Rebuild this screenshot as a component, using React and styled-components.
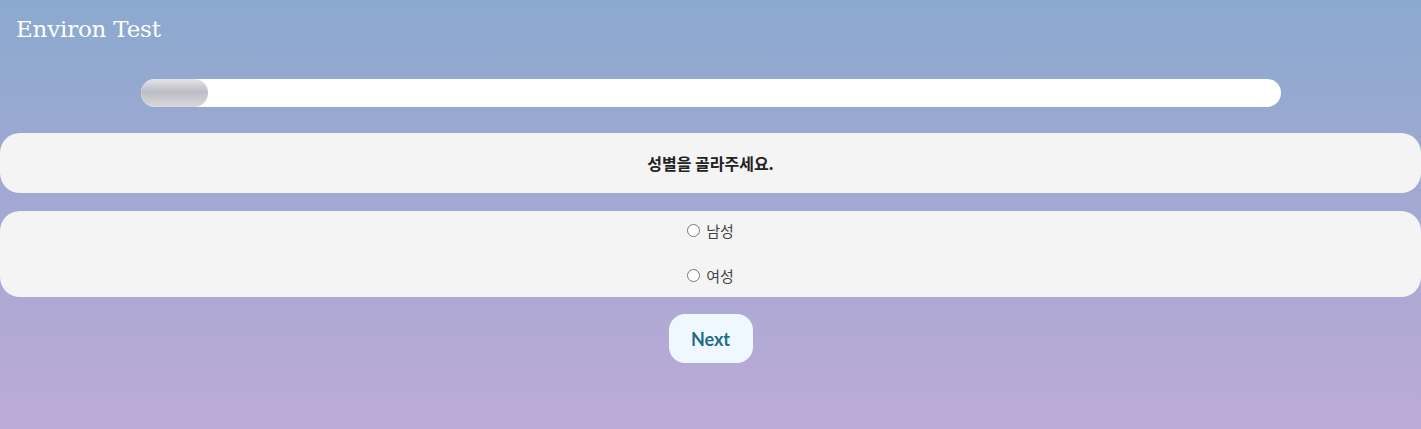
import styled, { createGlobalStyle } from 'styled-components'

const GlobalStyle = createGlobalStyle`
  html, body {
    margin: 0;
    padding: 0;
  }
  body {
    min-height: 429px;
    background: linear-gradient(180deg, #8ba9cf 0%, #a3a9d2 50%, #bdaad7 100%);
    font-family: 'Noto Sans CJK KR', 'Noto Sans', sans-serif;
  }
`

const Page = styled.div`
  min-height: 429px;
  display: flex;
  flex-direction: column;
`

const Title = styled.h1`
  margin: 0;
  padding: 16px 16px 0;
  height: 66px;
  box-sizing: border-box;
  font-family: 'DejaVu Serif', 'Liberation Serif', serif;
  font-weight: 400;
  font-size: 23px;
  letter-spacing: -0.2px;
  color: #ffffff;
`

const ProgressWrap = styled.div`
  display: flex;
  justify-content: center;
  margin-top: 13px;
`

const ProgressTrack = styled.div`
  width: 1140px;
  height: 28px;
  border-radius: 14px;
  background: #ffffff;
  overflow: hidden;
`

const ProgressFill = styled.div`
  height: 100%;
  border-radius: 14px;
  background: linear-gradient(180deg, #e4e4e8 0%, #bdbdc6 45%, #d8d8dc 100%);
`

const Card = styled.div`
  background: #f4f4f4;
  border-radius: 20px;
  display: flex;
  flex-direction: column;
  align-items: center;
`

const QuestionCard = styled(Card)`
  margin-top: 26px;
  height: 60px;
  justify-content: center;
`

const Question = styled.p`
  margin: 0;
  font-size: 16px;
  font-weight: 700;
  color: #222;
`

const OptionsCard = styled(Card)`
  margin-top: 18px;
  padding: 8px 0 11px;
  gap: 23px;
`

const Option = styled.label`
  display: flex;
  align-items: center;
  gap: 6px;
  font-size: 15px;
  color: #444;
  height: 22px;
`

const Radio = styled.input`
  margin: 0;
  width: 13px;
  height: 13px;
`

const ButtonRow = styled.div`
  display: flex;
  justify-content: center;
  margin-top: 17px;
`

const NextButton = styled.button`
  width: 84px;
  height: 49px;
  border: none;
  border-radius: 16px;
  background: #f0f8ff;
  color: #1e6b8a;
  font-family: 'Lato', 'Noto Sans', sans-serif;
  font-weight: 700;
  font-size: 18px;
  cursor: pointer;
`

const options = ['남성', '여성']

export default function App() {
  const progress = 67 / 1140

  return (
    <Page>
      <GlobalStyle />
      <Title>Environ Test</Title>
      <ProgressWrap>
        <ProgressTrack>
          <ProgressFill style={{ width: `${progress * 100}%` }} />
        </ProgressTrack>
      </ProgressWrap>
      <QuestionCard>
        <Question>성별을 골라주세요.</Question>
      </QuestionCard>
      <OptionsCard>
        {options.map((o) => (
          <Option key={o}>
            <Radio type="radio" name="gender" value={o} />
            {o}
          </Option>
        ))}
      </OptionsCard>
      <ButtonRow>
        <NextButton type="button">Next</NextButton>
      </ButtonRow>
    </Page>
  )
}
